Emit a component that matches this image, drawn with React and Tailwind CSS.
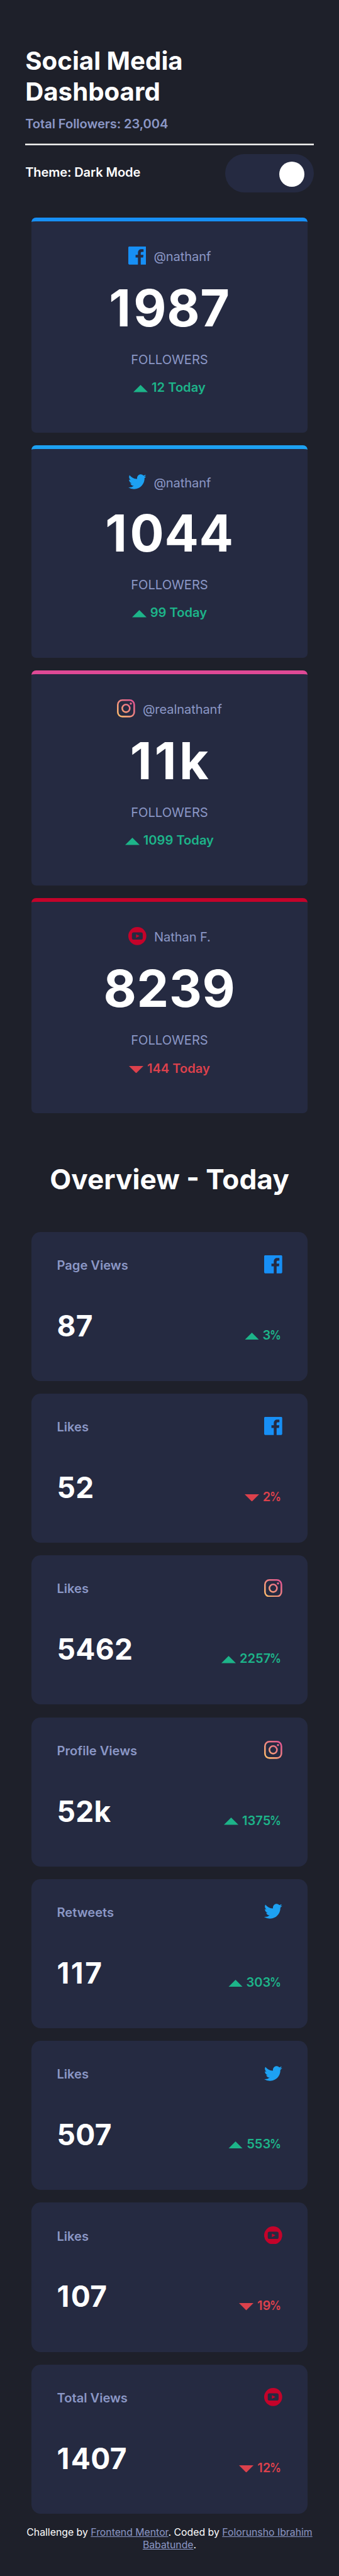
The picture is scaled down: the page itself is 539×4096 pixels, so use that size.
const FACEBOOK_PATH =
  "M18.896 0H1.104C.494 0 0 .494 0 1.104v17.793C0 19.506.494 20 1.104 20h9.58v-7.745H8.076V9.237h2.606V7.01c0-2.583 1.578-3.99 3.883-3.99 1.104 0 2.052.082 2.329.119v2.7h-1.598c-1.254 0-1.496.597-1.496 1.47v1.928h2.989l-.39 3.018h-2.6V20h5.098c.608 0 1.102-.494 1.102-1.104V1.104C20 .494 19.506 0 18.896 0z";
const TWITTER_PATH =
  "M20 2.172a8.192 8.192 0 01-2.357.646 4.11 4.11 0 001.805-2.27 8.22 8.22 0 01-2.606.996A4.096 4.096 0 0013.847.248c-2.65 0-4.596 2.472-3.998 5.037A11.648 11.648 0 011.392.998a4.109 4.109 0 001.27 5.478 4.086 4.086 0 01-1.858-.513c-.045 1.9 1.318 3.679 3.291 4.075a4.113 4.113 0 01-1.853.07 4.106 4.106 0 003.833 2.849A8.25 8.25 0 010 14.658a11.616 11.616 0 006.29 1.843c7.618 0 11.922-6.434 11.662-12.205A8.354 8.354 0 0020 2.172z";

function BrandIcon({ brand }) {
  if (brand === "facebook") {
    return (
      <svg viewBox="0 0 20 20" className="block h-[28.7px] w-[28.7px] shrink-0">
        <path fill="#178FF5" d={FACEBOOK_PATH} />
      </svg>
    );
  }
  if (brand === "twitter") {
    return (
      <svg viewBox="0 0 20 17" className="block h-[24.4px] w-[28.7px] shrink-0">
        <path fill="#1DA1F2" d={TWITTER_PATH} />
      </svg>
    );
  }
  if (brand === "instagram") {
    return (
      <svg viewBox="0 0 20 20" className="block h-[28.7px] w-[28.7px] shrink-0">
        <defs>
          <linearGradient id="insta" x1="0" y1="20" x2="20" y2="0" gradientUnits="userSpaceOnUse">
            <stop offset="0" stopColor="#FDC468" />
            <stop offset="1" stopColor="#DF4996" />
          </linearGradient>
        </defs>
        <rect x="0.9" y="0.9" width="18.2" height="18.2" rx="5" fill="none" stroke="url(#insta)" strokeWidth="1.8" />
        <circle cx="10" cy="10" r="4.2" fill="none" stroke="url(#insta)" strokeWidth="1.8" />
        <circle cx="15.34" cy="4.66" r="1.2" fill="url(#insta)" />
      </svg>
    );
  }
  return (
    <svg viewBox="0 0 20 20" className="block h-[28.7px] w-[28.7px] shrink-0">
      <path
        fill="#C4032A"
        fillRule="evenodd"
        d="M10 0a10 10 0 1 1 0 20a10 10 0 1 1 0-20zM6 6h8q2 0 2 2v4q0 2-2 2H6q-2 0-2-2V8q0-2 2-2zM8.6 8v4l3.9-2z"
      />
    </svg>
  );
}

/* Large figures, with a little extra room after each narrow "1". */
function Figure({ value }) {
  return [...value].map((digit, index) => (
    <span key={index} className={digit === "1" ? "tracking-[0.055em]" : "tracking-[0.008em]"}>
      {digit}
    </span>
  ));
}

function Trend({ up, percent, children }) {
  return (
    <div
      className={
        "flex h-[24.3px] items-center text-[20.12px] leading-[24.3px] font-semibold " +
        (up ? "text-[#1db489]" : "text-[#dc414c]")
      }
    >
      <svg viewBox="0 0 16 8" className="mt-[3px] mr-[5.8px] block h-[11.5px] w-[23px]">
        <path fill="currentColor" d={up ? "M0 8L8 0L16 8z" : "M0 0L8 8L16 0z"} />
      </svg>
      <span>{children}</span>
      {percent && <span className="-mr-[1px] -ml-[1px] origin-left scale-x-[0.89]">%</span>}
    </div>
  );
}

const accounts = [
  { brand: "facebook", name: "@nathanf", count: "1987", up: true, change: "12 Today", style: "h-[342.1px] border-[#178FF5]" },
  { brand: "twitter", name: "@nathanf", count: "1044", up: true, change: "99 Today", style: "h-[337.8px] border-[#1DA1F2]" },
  { brand: "instagram", name: "@realnathanf", count: "11k", up: true, change: "1099 Today", style: "h-[342.1px] border-[#DF4996]" },
  { brand: "youtube", name: "Nathan F.", count: "8239", up: false, change: "144 Today", style: "h-[342.1px] border-[#C4032A]" },
];

const stats = [
  { label: "Page Views", brand: "facebook", value: "87", up: true, change: "3" },
  { label: "Likes", brand: "facebook", value: "52", up: false, change: "2" },
  { label: "Likes", brand: "instagram", value: "5462", up: true, change: "2257" },
  { label: "Profile Views", brand: "instagram", value: "52k", up: true, change: "1375" },
  { label: "Retweets", brand: "twitter", value: "117", up: true, change: "303" },
  { label: "Likes", brand: "twitter", value: "507", up: true, change: "553" },
  { label: "Likes", brand: "youtube", value: "107", up: false, change: "19" },
  { label: "Total Views", brand: "youtube", value: "1407", up: false, change: "12" },
];

function AccountCard({ account }) {
  return (
    <article
      className={
        "flex flex-col items-center rounded-[7.2px] border-t-[6px] bg-[#252a41] pt-[40px] " + account.style
      }
    >
      <div className="flex items-center">
        <BrandIcon brand={account.brand} />
        <span className="-my-2 ml-[12px] pt-[3.2px] text-[20.12px] leading-[24.3px] tracking-[-0.1px] text-[#8b97c6]">
          {account.name}
        </span>
      </div>
      <div className="mt-[20.1px] text-[80.5px] leading-[97.4px] font-bold text-white">
        <Figure value={account.count} />
      </div>
      <div className="mt-[21.5px] text-[20.12px] leading-[24.3px] text-[#8b97c6]">FOLLOWERS</div>
      <div className="mt-[20.3px]">
        <Trend up={account.up}>{account.change}</Trend>
      </div>
    </article>
  );
}

function StatCard({ stat }) {
  return (
    <article className="h-[237.2px] rounded-[14.4px] bg-[#252a41] px-[40.2px] pt-[37.4px]">
      <div className="flex h-[28.7px] items-center justify-between">
        <span className="pt-[3.2px] text-[20.12px] leading-[24.3px] font-semibold text-[#8b97c6]">{stat.label}</span>
        <BrandIcon brand={stat.brand} />
      </div>
      <div className="mt-[56px] flex items-start justify-between">
        <span className="text-[46px] leading-[55.7px] font-bold text-white">
          <Figure value={stat.value} />
        </span>
        <div className="mt-[29.9px]">
          <Trend up={stat.up} percent>
            {stat.change}
          </Trend>
        </div>
      </div>
    </article>
  );
}

export default function App() {
  return (
    <div className="h-[4096px] w-[539px] overflow-hidden bg-[#1e202a] font-['Inter',sans-serif]">
      <header className="px-[40.2px] pt-[73.3px]">
        <h1 className="text-[40.24px] leading-[48.7px] font-bold text-white">
          Social Media
          <br />
          Dashboard
        </h1>
        <p className="mt-[14.1px] text-[20.12px] leading-[24.3px] font-semibold tracking-[-0.06px] text-[#8b97c6]">
          Total Followers: 23,004
        </p>
        <div className="mt-[18.8px] h-[3px] border-t border-b-2 border-t-[#9a9a9a] border-b-[#eeeeee]" />
        <div className="mt-[14.6px] flex justify-between">
          <span className="mt-[16.8px] text-[20.12px] leading-[24.3px] font-semibold tracking-[-0.13px] text-white">
            Theme: Dark Mode
          </span>
          <div className="flex h-[60.4px] w-[140.9px] justify-end rounded-full bg-[#252a41] pt-[11.5px] pr-[14.4px]">
            <div className="h-[40.2px] w-[40.2px] rounded-full bg-white" />
          </div>
        </div>
      </header>

      <main className="px-[50.3px] pt-[40.2px]">
        <section className="flex flex-col gap-[20.1px]">
          {accounts.map((account) => (
            <AccountCard key={account.brand} account={account} />
          ))}
        </section>
        <h2 className="mt-[77.1px] text-center text-[44.2px] leading-[55.7px] font-bold text-white">
          Overview - Today
        </h2>
        <section className="mt-[55.5px] flex flex-col gap-[20.1px]">
          {stats.map((stat, index) => (
            <StatCard key={index} stat={stat} />
          ))}
        </section>
      </main>

      <footer className="mt-[20.3px] text-center text-[15.81px] leading-[20.1px] text-white">
        Challenge by <a className="text-[#8b97c6] underline">Frontend Mentor</a>. Coded by{" "}
        <a className="text-[#8b97c6] underline">
          Folorunsho Ibrahim
          <br />
          Babatunde
        </a>
        .
      </footer>
    </div>
  );
}
